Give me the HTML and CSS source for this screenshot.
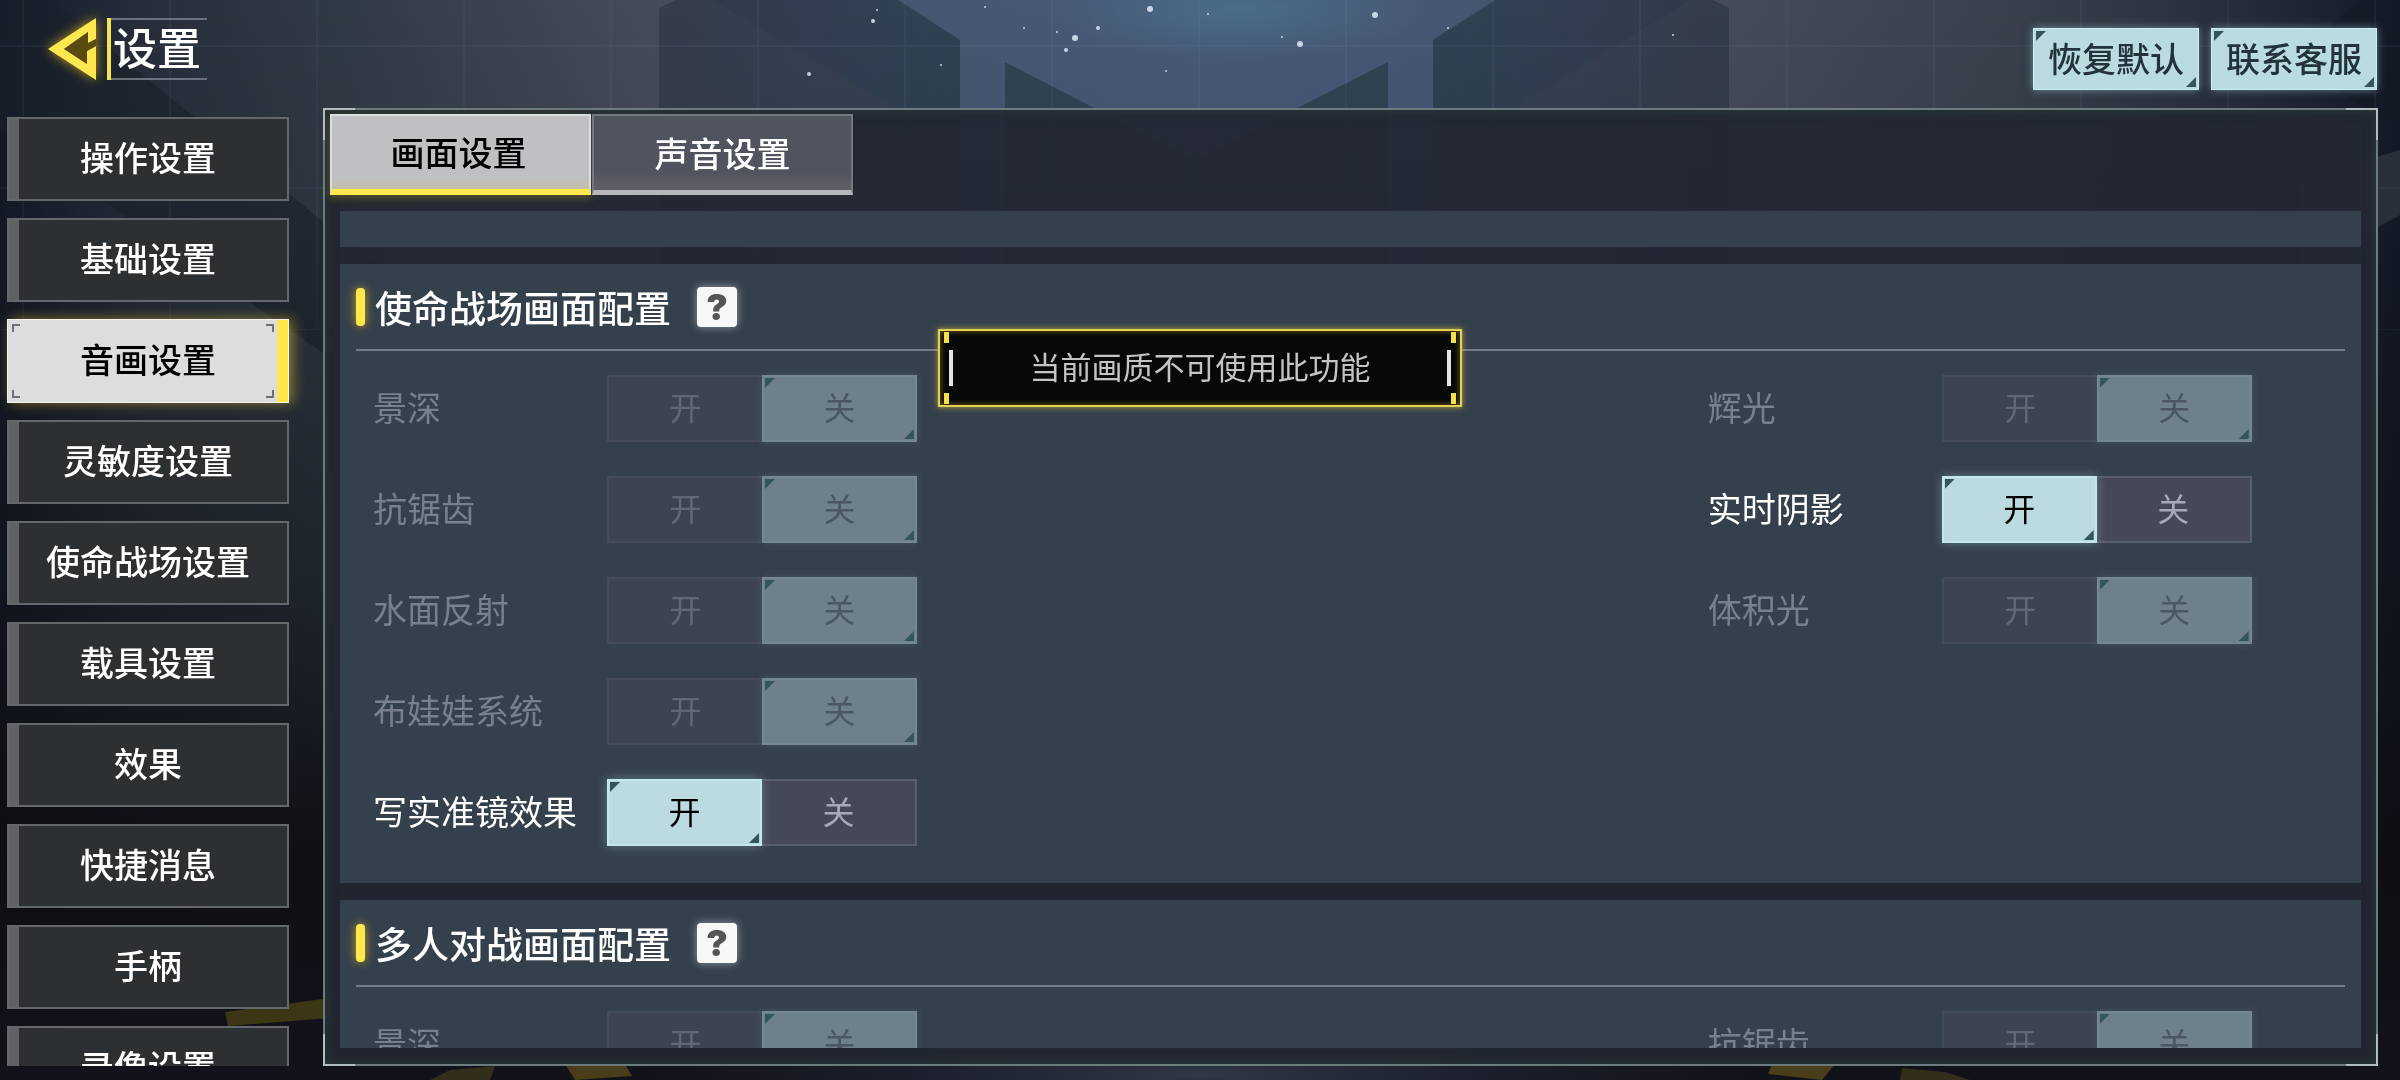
FILE: index.html
```html
<!DOCTYPE html>
<html lang="zh-CN">
<head>
<meta charset="utf-8">
<meta name="viewport" content="width=device-width, initial-scale=1">
<title>设置</title>
<link rel="stylesheet" href="styles.css">
</head>
<body>
<svg class="backdrop" viewBox="0 0 2400 1080" preserveAspectRatio="none" aria-hidden="true">
  <defs>
    <linearGradient id="base" x1="0" y1="0" x2="1" y2="0">
      <stop offset="0" stop-color="#141a26"/>
      <stop offset=".06" stop-color="#272e3a"/>
      <stop offset=".14" stop-color="#303a44"/>
      <stop offset=".27" stop-color="#454b5a"/>
      <stop offset=".4" stop-color="#475773"/>
      <stop offset=".5" stop-color="#485a78"/>
      <stop offset=".6" stop-color="#475773"/>
      <stop offset=".72" stop-color="#454b5a"/>
      <stop offset=".84" stop-color="#38414b"/>
      <stop offset=".93" stop-color="#272e3a"/>
      <stop offset="1" stop-color="#131926"/>
    </linearGradient>
    <linearGradient id="night" x1="0" y1="0" x2="0" y2="1">
      <stop offset="0" stop-color="#0d0e14" stop-opacity="0"/>
      <stop offset=".2" stop-color="#0d0e14" stop-opacity=".1"/>
      <stop offset=".55" stop-color="#0d0e14" stop-opacity=".5"/>
      <stop offset=".8" stop-color="#0d0d12" stop-opacity=".95"/>
      <stop offset="1" stop-color="#12121b" stop-opacity="1"/>
    </linearGradient>
    <linearGradient id="pillar" x1="0" y1="0" x2="1" y2="0">
      <stop offset="0" stop-color="#2e3847"/>
      <stop offset=".5" stop-color="#323e52"/>
      <stop offset="1" stop-color="#2e4253"/>
    </linearGradient>
    <linearGradient id="pillarR" x1="1" y1="0" x2="0" y2="0">
      <stop offset="0" stop-color="#2e3847"/>
      <stop offset=".5" stop-color="#323e52"/>
      <stop offset="1" stop-color="#2e4253"/>
    </linearGradient>
    <radialGradient id="glow">
      <stop offset="0" stop-color="#4a7590"/>
      <stop offset="1" stop-color="#4a7590" stop-opacity="0"/>
    </radialGradient>
    <radialGradient id="floor">
      <stop offset="0" stop-color="#303848"/>
      <stop offset="1" stop-color="#202634" stop-opacity="0"/>
    </radialGradient>
    <pattern id="grid" width="147" height="142" patternUnits="userSpaceOnUse" x="22" y="45">
      <path d="M0 0H147M0 0V142" stroke="#8fa0c8" stroke-opacity=".07" stroke-width="4" fill="none"/>
    </pattern>
  </defs>
  <rect width="2400" height="1080" fill="url(#base)"/>
  <ellipse cx="1240" cy="10" rx="190" ry="50" fill="url(#glow)" fill-opacity=".7"/>
  <path d="M659 1080V8L676 0H898L960 40V1080Z" fill="url(#pillar)"/>
  <path d="M659 110V8L676 0H712L900 110Z" fill="#3b4150" fill-opacity=".55"/>
  <path d="M1729 1080V8L1712 0H1495L1433 40V1080Z" fill="url(#pillarR)"/>
  <path d="M1729 110V8L1712 0H1690L1510 110Z" fill="#3b4150" fill-opacity=".55"/>
  <path d="M1005 62L1195 160L1388 62V600H1005Z" fill="#314354"/>
  <path d="M0 0H50L420 300V420L0 130Z" fill="#1b212c" fill-opacity=".6"/>
  <path d="M2400 0H2360L2290 60L2400 130Z" fill="#141a24" fill-opacity=".6"/>
  <path d="M2300 180L2400 150V215L2300 270Z" fill="#3b444d" fill-opacity=".6"/>
  <rect width="2400" height="330" fill="url(#grid)"/>
  <g fill="#c9d8e8">
    <circle cx="1150" cy="9" r="3"/><circle cx="1375" cy="15" r="3"/><circle cx="1098" cy="28" r="2"/>
    <circle cx="1075" cy="38" r="3"/><circle cx="1300" cy="44" r="3"/><circle cx="1066" cy="50" r="2"/>
    <circle cx="873" cy="21" r="2"/><circle cx="877" cy="10" r="1"/><circle cx="809" cy="74" r="2"/>
    <circle cx="1024" cy="28" r="1"/><circle cx="985" cy="7" r="1"/><circle cx="1208" cy="14" r="1"/>
    <circle cx="1282" cy="37" r="1"/><circle cx="941" cy="65" r="1"/><circle cx="1673" cy="35" r="1"/>
    <circle cx="1057" cy="32" r="1"/><circle cx="1448" cy="28" r="1"/><circle cx="1166" cy="71" r="1"/>
  </g>
  <rect width="2400" height="1080" fill="url(#night)"/>
  <ellipse cx="1200" cy="1075" rx="560" ry="60" fill="url(#floor)"/>
  <path d="M225 1012L330 998V1018L228 1026Z" fill="#3d3614"/>
  <path d="M565 1064H625L632 1076L575 1080Z M1772 1064H1835L1822 1080L1768 1074Z" fill="#4a3e1a"/>
  <path d="M450 1070L495 1066L490 1080H430Z M1902 1068L1945 1072L1970 1080H1900Z" fill="#332d1c"/>
</svg>

<div class="screen">
  <header class="topbar">
    <div class="heading">
      <button class="back" type="button" aria-label="返回">
        <svg viewBox="0 0 48 62" width="48" height="62" aria-hidden="true">
          <path d="M16 31L40 14V25L48 21V0L0 31L48 62V28L39 33V46Z" fill="#ffe84f"/>
          <path d="M16 31L40 14V25L48 21V28L39 33V46Z" fill="#5a4a10"/>
        </svg>
      </button>
      <h1 class="title">设置</h1>
    </div>
    <div class="actions">
      <button class="action ticked" type="button">恢复默认</button>
      <button class="action ticked" type="button">联系客服</button>
    </div>
  </header>

  <div class="body">
    <nav class="menu" aria-label="设置分类">
      <button class="item" type="button">操作设置</button>
      <button class="item" type="button">基础设置</button>
      <button class="item current" type="button" aria-current="page">音画设置</button>
      <button class="item" type="button">灵敏度设置</button>
      <button class="item" type="button">使命战场设置</button>
      <button class="item" type="button">载具设置</button>
      <button class="item" type="button">效果</button>
      <button class="item" type="button">快捷消息</button>
      <button class="item" type="button">手柄</button>
      <button class="item" type="button">录像设置</button>
    </nav>

    <main class="panel">
      <div class="tabs" role="tablist">
        <button class="tab active" type="button" role="tab" aria-selected="true">画面设置</button>
        <button class="tab" type="button" role="tab" aria-selected="false">声音设置</button>
      </div>

      <div class="scroll">
        <div class="card tail"></div>

        <section class="card">
          <div class="card-head">
            <h2 class="card-title">使命战场画面配置</h2>
            <button class="help" type="button" aria-label="帮助">?</button>
          </div>
          <div class="columns">
            <div class="column">
              <fieldset class="row" disabled>
                <legend class="name">景深</legend>
                <label class="option"><input type="radio" name="a1"><span>开</span></label>
                <label class="option"><input type="radio" name="a1" checked><span class="ticked">关</span></label>
              </fieldset>
              <fieldset class="row" disabled>
                <legend class="name">抗锯齿</legend>
                <label class="option"><input type="radio" name="a2"><span>开</span></label>
                <label class="option"><input type="radio" name="a2" checked><span class="ticked">关</span></label>
              </fieldset>
              <fieldset class="row" disabled>
                <legend class="name">水面反射</legend>
                <label class="option"><input type="radio" name="a3"><span>开</span></label>
                <label class="option"><input type="radio" name="a3" checked><span class="ticked">关</span></label>
              </fieldset>
              <fieldset class="row" disabled>
                <legend class="name">布娃娃系统</legend>
                <label class="option"><input type="radio" name="a4"><span>开</span></label>
                <label class="option"><input type="radio" name="a4" checked><span class="ticked">关</span></label>
              </fieldset>
              <fieldset class="row">
                <legend class="name">写实准镜效果</legend>
                <label class="option"><input type="radio" name="a5" checked><span class="ticked">开</span></label>
                <label class="option"><input type="radio" name="a5"><span>关</span></label>
              </fieldset>
            </div>
            <div class="column">
              <fieldset class="row" disabled>
                <legend class="name">辉光</legend>
                <label class="option"><input type="radio" name="a6"><span>开</span></label>
                <label class="option"><input type="radio" name="a6" checked><span class="ticked">关</span></label>
              </fieldset>
              <fieldset class="row">
                <legend class="name">实时阴影</legend>
                <label class="option"><input type="radio" name="a7" checked><span class="ticked">开</span></label>
                <label class="option"><input type="radio" name="a7"><span>关</span></label>
              </fieldset>
              <fieldset class="row" disabled>
                <legend class="name">体积光</legend>
                <label class="option"><input type="radio" name="a8"><span>开</span></label>
                <label class="option"><input type="radio" name="a8" checked><span class="ticked">关</span></label>
              </fieldset>
            </div>
          </div>
        </section>

        <section class="card">
          <div class="card-head">
            <h2 class="card-title">多人对战画面配置</h2>
            <button class="help" type="button" aria-label="帮助">?</button>
          </div>
          <div class="columns">
            <div class="column">
              <fieldset class="row" disabled>
                <legend class="name">景深</legend>
                <label class="option"><input type="radio" name="b1"><span>开</span></label>
                <label class="option"><input type="radio" name="b1" checked><span class="ticked">关</span></label>
              </fieldset>
            </div>
            <div class="column">
              <fieldset class="row" disabled>
                <legend class="name">抗锯齿</legend>
                <label class="option"><input type="radio" name="b2"><span>开</span></label>
                <label class="option"><input type="radio" name="b2" checked><span class="ticked">关</span></label>
              </fieldset>
            </div>
          </div>
        </section>
      </div>
    </main>
  </div>
</div>

<div class="toast" role="status">当前画质不可使用此功能</div>
</body>
</html>
```

FILE: styles.css
```css
* {
  box-sizing: border-box;
}

body {
  margin: 0;
  background: #12151d;
  color: #fff;
  font-family: "Noto Sans CJK SC", "Noto Sans", sans-serif;
  font-size: 34px;
  line-height: 48px;
}

button {
  margin: 0;
  padding: 0;
  border: 0;
  background: none;
  color: inherit;
  font: inherit;
  font-weight: 500;
}

.backdrop {
  position: fixed;
  inset: 0;
  width: 100%;
  height: 100%;
}

.screen {
  position: relative;
  display: flex;
  flex-direction: column;
  height: 100vh;
  padding-bottom: 14px;
}

/* Top bar */

.topbar {
  display: flex;
  justify-content: space-between;
  align-items: flex-start;
  height: 108px;
  padding: 18px 23px 0 48px;
}

.heading {
  display: flex;
  gap: 11px;
}

.back {
  display: flex;
  filter: drop-shadow(0 0 6px rgba(255, 205, 20, .7));
}

.title {
  width: 100px;
  height: 62px;
  margin: 0;
  padding-left: 2px;
  border-left: 4px solid #f7e251;
  background:
    linear-gradient(#69727d, #69727d) top / 100% 2px no-repeat,
    linear-gradient(#69727d, #69727d) bottom / 100% 2px no-repeat;
  font-size: 44px;
  font-weight: 500;
  line-height: 56px;
}

.actions {
  display: flex;
  gap: 12px;
  padding-top: 10px;
}

.action {
  height: 62px;
  padding: 0 15px 2px;
  background: #badbdf;
  box-shadow: inset 0 0 0 1px #cdeeee, 0 0 8px rgba(170, 225, 230, .5);
  color: #22343a;
}

/* Dark corner ticks on highlighted buttons */

.ticked {
  position: relative;
}

.ticked::before,
.ticked::after {
  content: "";
  position: absolute;
  width: 10px;
  height: 10px;
  background: #34555a;
}

.ticked::before {
  top: 3px;
  left: 3px;
  clip-path: polygon(0 0, 100% 0, 0 100%);
}

.ticked::after {
  right: 3px;
  bottom: 3px;
  clip-path: polygon(100% 0, 100% 100%, 0 100%);
}

/* Side menu */

.body {
  display: flex;
  flex: 1;
  min-height: 0;
}

.menu {
  display: flex;
  flex-direction: column;
  gap: 17px;
  width: 323px;
  padding: 9px 34px 0 7px;
  overflow: hidden;
}

.item {
  flex: none;
  height: 84px;
  padding-bottom: 4px;
  border: 2px solid #64676b;
  background: linear-gradient(90deg, #606265 10px, #2d3033 10px);
}

.item.current {
  position: relative;
  border: 0;
  background: linear-gradient(90deg, #dcdddf calc(100% - 12px), #ffe84c calc(100% - 12px));
  box-shadow: inset 0 0 0 1px #f4f4ef, 4px 0 12px rgba(255, 220, 50, .45);
  color: #000;
}

.item.current::before {
  --tick: #6f7071;
  content: "";
  position: absolute;
  inset: 5px 15px 5px 5px;
  background:
    linear-gradient(var(--tick), var(--tick)) 0 0 / 8px 2px,
    linear-gradient(var(--tick), var(--tick)) 0 0 / 2px 8px,
    linear-gradient(var(--tick), var(--tick)) 100% 0 / 8px 2px,
    linear-gradient(var(--tick), var(--tick)) 100% 0 / 2px 8px,
    linear-gradient(var(--tick), var(--tick)) 0 100% / 8px 2px,
    linear-gradient(var(--tick), var(--tick)) 0 100% / 2px 8px,
    linear-gradient(var(--tick), var(--tick)) 100% 100% / 8px 2px,
    linear-gradient(var(--tick), var(--tick)) 100% 100% / 2px 8px;
  background-repeat: no-repeat;
}

/* Main panel */

.panel {
  position: relative;
  display: flex;
  flex: 1;
  flex-direction: column;
  min-width: 0;
  margin-right: 22px;
  padding: 4px 15px 16px;
  border: 2px solid #6c7b7e;
  background: rgba(34, 39, 50, .93);
  box-shadow: inset 0 0 12px rgba(44, 66, 64, .7);
}

.panel::before {
  --edge: #b3bcbf;
  content: "";
  position: absolute;
  inset: -2px;
  background:
    linear-gradient(var(--edge), var(--edge)) 0 0 / 32px 2px,
    linear-gradient(var(--edge), var(--edge)) 0 0 / 2px 32px,
    linear-gradient(var(--edge), var(--edge)) 100% 0 / 32px 2px,
    linear-gradient(var(--edge), var(--edge)) 100% 0 / 2px 32px,
    linear-gradient(var(--edge), var(--edge)) 0 100% / 32px 2px,
    linear-gradient(var(--edge), var(--edge)) 0 100% / 2px 32px,
    linear-gradient(var(--edge), var(--edge)) 100% 100% / 32px 2px,
    linear-gradient(var(--edge), var(--edge)) 100% 100% / 2px 32px;
  background-repeat: no-repeat;
  pointer-events: none;
}

.tabs {
  display: flex;
  gap: 1px;
  margin: 0 -10px 16px;
}

.tab {
  width: 261px;
  height: 81px;
  border: 2px solid #75797f;
  border-bottom: 5px solid #b5b6bb;
  background: linear-gradient(#50545e 75%, #605f68);
}

.tab.active {
  padding: 0 4px 2px 0;
  border-color: #dcddde;
  border-bottom: 6px solid #ffe94f;
  background: linear-gradient(#bec0c3 85%, #c5bfa8);
  box-shadow: 0 3px 8px rgba(160, 140, 30, .45);
  color: #000;
}

.scroll {
  display: flex;
  flex: 1;
  flex-direction: column;
  gap: 17px;
  min-height: 0;
  overflow: hidden;
}

.card {
  flex: none;
  padding: 0 16px 37px;
  background: #35404d;
}

.card.tail {
  height: 36px;
  padding: 0;
}

.card-head {
  display: flex;
  align-items: center;
  height: 87px;
  border-bottom: 2px solid #727d88;
}

.card-title {
  display: flex;
  align-items: center;
  gap: 10px;
  margin: 0;
  font-size: 37px;
  font-weight: 500;
  line-height: 48px;
}

.card-title::before {
  content: "";
  width: 9px;
  height: 38px;
  border-radius: 4px;
  background: #ffe84c;
  box-shadow: 0 0 10px rgba(255, 200, 20, .7);
}

.help {
  width: 40px;
  height: 40px;
  margin-left: 26px;
  border-radius: 4px;
  background: #f7f7f7;
  box-shadow: 0 0 8px rgba(235, 245, 250, .5);
  color: #555;
  font-family: Inter, "Liberation Sans", sans-serif;
  font-size: 36px;
  font-weight: 900;
  line-height: 40px;
}

.columns {
  display: grid;
  grid-template-columns: 2fr 1fr;
  gap: 60px;
  padding: 24px 0 0 17px;
}

.column {
  display: flex;
  flex-direction: column;
  gap: 34px;
}

/* A setting: its name, then an on/off pair */

.row {
  display: flex;
  min-width: 0;
  height: 67px;
  margin: 0;
  padding: 0;
  border: 0;
}

.name {
  float: left;
  width: 234px;
  padding: 8px 0 0;
  white-space: nowrap;
}

.option {
  display: flex;
}

.option input {
  position: absolute;
  opacity: 0;
}

.option span {
  display: block;
  width: 155px;
  height: 67px;
  padding-top: 5px;
  border: 2px solid #585e6a;
  background: #454856;
  color: #a6aab8;
  font-size: 32px;
  text-align: center;
}

.option:first-of-type span:not(.ticked) {
  border-right: 0;
}

.option:last-of-type span:not(.ticked) {
  border-left: 0;
}

.option input:checked + span {
  border-color: #c4e8ea;
  background: #bbdbe0;
  box-shadow: 0 0 10px rgba(150, 210, 215, .4);
  color: #000;
}

.option .ticked::before {
  top: 1px;
  left: 1px;
}

.option .ticked::after {
  right: 1px;
  bottom: 1px;
}

.row:disabled .name {
  color: #78808b;
}

.row:disabled .option span {
  border-color: #434c58;
  background: #3c4450;
  color: #616874;
}

.row:disabled .option input:checked + span {
  border-color: #738891;
  background: #6e818a;
  box-shadow: 0 0 8px rgba(110, 150, 155, .25);
  color: #4a5760;
}

/* Message over the page */

.toast {
  position: fixed;
  top: 329px;
  left: 50%;
  width: 524px;
  height: 78px;
  margin-left: -262px;
  border: 2px solid #e0d254;
  background: rgba(5, 6, 8, .97);
  box-shadow: 0 0 6px rgba(240, 215, 40, .7), inset 0 0 6px rgba(150, 130, 20, .8);
  color: #c4c4c7;
  font-size: 31px;
  line-height: 70px;
  text-align: center;
}

.toast::before,
.toast::after {
  content: "";
  position: absolute;
  top: 1px;
  bottom: 1px;
  width: 9px;
  background:
    linear-gradient(#f2df4b, #f2df4b) 0 0 / 5px 11px,
    linear-gradient(#f2df4b, #f2df4b) 0 100% / 5px 11px,
    linear-gradient(#e4e4e8, #e4e4e8) 100% 50% / 4px 36px;
  background-repeat: no-repeat;
}

.toast::before {
  left: 4px;
}

.toast::after {
  right: 4px;
  transform: scaleX(-1);
}
```
